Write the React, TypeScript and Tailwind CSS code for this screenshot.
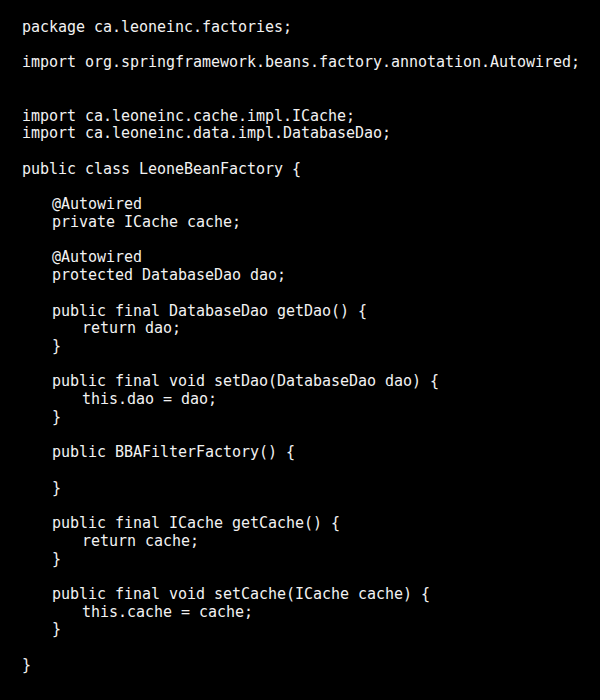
const indents = ["pl-0", "pl-[30px]", "pl-[60px]"];

// [indent level, text]
const lines: [number, string][] = [
  [0, "package ca.leoneinc.factories;"],
  [0, ""],
  [0, "import org.springframework.beans.factory.annotation.Autowired;"],
  [0, ""],
  [0, ""],
  [0, "import ca.leoneinc.cache.impl.ICache;"],
  [0, "import ca.leoneinc.data.impl.DatabaseDao;"],
  [0, ""],
  [0, "public class LeoneBeanFactory {"],
  [0, ""],
  [1, "@Autowired"],
  [1, "private ICache cache;"],
  [0, ""],
  [1, "@Autowired"],
  [1, "protected DatabaseDao dao;"],
  [0, ""],
  [1, "public final DatabaseDao getDao() {"],
  [2, "return dao;"],
  [1, "}"],
  [0, ""],
  [1, "public final void setDao(DatabaseDao dao) {"],
  [2, "this.dao = dao;"],
  [1, "}"],
  [0, ""],
  [1, "public BBAFilterFactory() {"],
  [0, ""],
  [1, "}"],
  [0, ""],
  [1, "public final ICache getCache() {"],
  [2, "return cache;"],
  [1, "}"],
  [0, ""],
  [1, "public final void setCache(ICache cache) {"],
  [2, "this.cache = cache;"],
  [1, "}"],
  [0, ""],
  [0, "}"],
];

export default function App() {
  return (
    <div className="w-[600px] h-[700px] bg-black overflow-hidden pt-[19px] pl-[22px]">
      <div className="font-['DejaVu_Sans_Mono','Liberation_Mono',monospace] text-[15px] leading-[17.72px] tracking-[-0.03px] text-[#f2f2f2]">
        {lines.map(([level, text], i) => (
          <div key={i} className={`whitespace-pre ${indents[level]}`}>
            {text || " "}
          </div>
        ))}
      </div>
    </div>
  );
}
